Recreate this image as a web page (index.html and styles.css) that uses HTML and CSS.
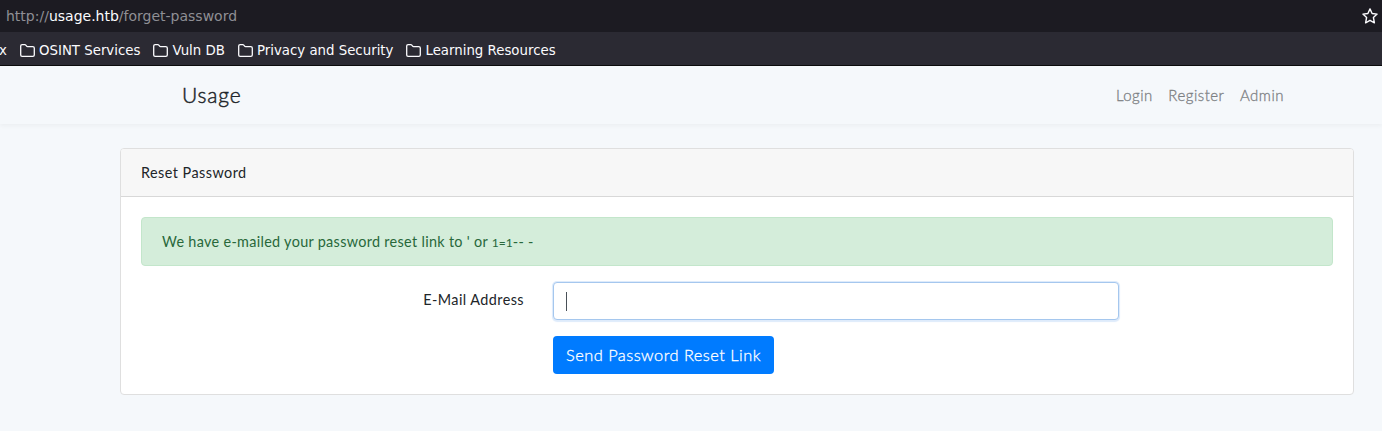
FILE: index.html
```html
<!DOCTYPE html>
<html lang="en">
<head>
<meta charset="utf-8">
<title>Usage</title>
<link rel="stylesheet" href="styles.css">
</head>
<body>
<div class="urlbar">
  <div class="url">http://<span class="host">usage.htb</span>/forget-password</div>
  <svg class="star" width="16" height="16" viewBox="0 0 16 16"><path d="M8 .9l2.100 4.600 5 .6-3.700 3.400 1 5.300L8 12.300l-4.400 2.500 1-5.300L.9 6.100l5-.6z"/></svg>
</div>
<div class="bookmarks">
  <span class="cut">x</span>
  <span class="mark"><svg class="folder" width="15" height="13" viewBox="0 0 15 13"><path d="M.7 10.900V2.100Q.7.7 2.100.7h2.700q.6 0 1 .5l.8 1q.3.400.9.400h5.200q1.600 0 1.600 1.500v6.800q0 1.400-1.500 1.400H2.100Q.7 12.300.7 10.900z"/></svg><span>OSINT Services</span></span>
  <span class="mark"><svg class="folder" width="15" height="13" viewBox="0 0 15 13"><path d="M.7 10.900V2.100Q.7.7 2.100.7h2.700q.6 0 1 .5l.8 1q.3.400.9.400h5.200q1.600 0 1.600 1.500v6.800q0 1.400-1.500 1.400H2.100Q.7 12.300.7 10.900z"/></svg><span>Vuln DB</span></span>
  <span class="mark"><svg class="folder" width="15" height="13" viewBox="0 0 15 13"><path d="M.7 10.900V2.100Q.7.7 2.100.7h2.700q.6 0 1 .5l.8 1q.3.400.9.400h5.200q1.600 0 1.600 1.500v6.800q0 1.400-1.500 1.400H2.100Q.7 12.300.7 10.900z"/></svg><span>Privacy and Security</span></span>
  <span class="mark"><svg class="folder" width="15" height="13" viewBox="0 0 15 13"><path d="M.7 10.900V2.100Q.7.7 2.100.7h2.700q.6 0 1 .5l.8 1q.3.400.9.400h5.200q1.600 0 1.600 1.500v6.800q0 1.400-1.500 1.400H2.100Q.7 12.300.7 10.900z"/></svg><span>Learning Resources</span></span>
</div>
<nav class="navbar">
  <a class="brand">Usage</a>
  <div class="links"><a>Login</a><a>Register</a><a>Admin</a></div>
</nav>
<main class="card">
  <div class="card-header">Reset Password</div>
  <div class="card-body">
    <div class="alert">We have e-mailed your password reset link to ' or <span class="num">1=1</span>-- -</div>
    <div class="row">
      <label class="label">E-Mail Address</label>
      <div class="field"><span class="caret"></span></div>
    </div>
    <div class="actions"><button class="submit">Send Password Reset Link</button></div>
  </div>
</main>
</body>
</html>
```
FILE: styles.css
```css
* { box-sizing: border-box; }
body {
  margin: 0;
  height: 431px;
  overflow: hidden;
  background: #f5f8fb;
  color: #212529;
  font: 400 14.4px/23px Lato, sans-serif;
}
.urlbar {
  display: flex;
  justify-content: space-between;
  height: 32px;
  padding: 0 4px 0 6px;
  background: #1c1b22;
  color: #8f8f95;
  font: 14px/33px "DejaVu Sans", sans-serif;
}
.host { color: #fbfbfe; }
.star { margin-top: 8px; fill: none; stroke: #fbfbfe; stroke-width: 1.4; stroke-linejoin: round; }
.bookmarks {
  display: flex;
  height: 34px;
  border-bottom: 1px solid #0c0c0d;
  background: #2b2a33;
  color: #fbfbfe;
  font: 13.33px/37px "DejaVu Sans", sans-serif;
  white-space: nowrap;
}
.cut { width: 21px; margin-left: -1px; flex: none; }
.mark { display: flex; gap: 4px; margin-right: 13px; }
.folder { margin-top: 12px; flex: none; fill: none; stroke: #fbfbfe; stroke-width: 1.3; }
.navbar {
  display: flex;
  justify-content: space-between;
  height: 58px;
  padding: 0 98px 0 182px;
  box-shadow: 0 2px 4px rgba(0, 0, 0, .04);
  line-height: 59px;
}
.brand { font-size: 21px; line-height: 57px; letter-spacing: .85px; font-weight: 300; -webkit-text-stroke: .45px; }
.links { display: flex; gap: 15.5px; color: #7d8184; font-size: 15px; font-weight: 300; letter-spacing: .5px; -webkit-text-stroke: .3px; }
.card {
  width: 1234px;
  height: 247px;
  margin: 24px 0 0 120px;
  border: 1px solid #dfdfdf;
  border-radius: 4px;
  background: #fff;
}
.card-header {
  height: 48px;
  padding: 12px 20px;
  border-bottom: 1px solid #d8d8d8;
  border-radius: 3px 3px 0 0;
  background: #f7f7f7;
  letter-spacing: .46px;
}
.card-body { padding: 20px; }
.alert {
  height: 49px;
  padding: 12px 20px;
  border: 1px solid #c3e6cb;
  border-radius: 4px;
  background: #d4edda;
  color: #28683a;
  letter-spacing: .32px;
}
.num { font-size: 12px; letter-spacing: 0; }
.row { display: flex; gap: 29px; margin-top: 16px; }
.label { width: 383px; padding-top: 6px; text-align: right; letter-spacing: .43px; }
.field {
  width: 566px;
  height: 38px;
  padding: 9px 12px;
  border: 1px solid #a5c7ee;
  border-radius: 4px;
  background: #fff;
  box-shadow: 0 1px 1px 1px #deebfb, 0 0 0 1px #deebfb;
}
.caret { display: block; width: 1px; height: 19px; background: #495057; }
.actions { padding: 16px 0 0 412px; }
.submit {
  display: block;
  width: 221px;
  height: 38px;
  padding: 0 13px;
  border: 0;
  border-radius: 4px;
  background: #007bff;
  color: #fff;
  font: 300 16.4px/38px Lato, sans-serif;
  letter-spacing: .48px;
  -webkit-text-stroke: .3px;
  text-align: left;
  white-space: nowrap;
}
```
